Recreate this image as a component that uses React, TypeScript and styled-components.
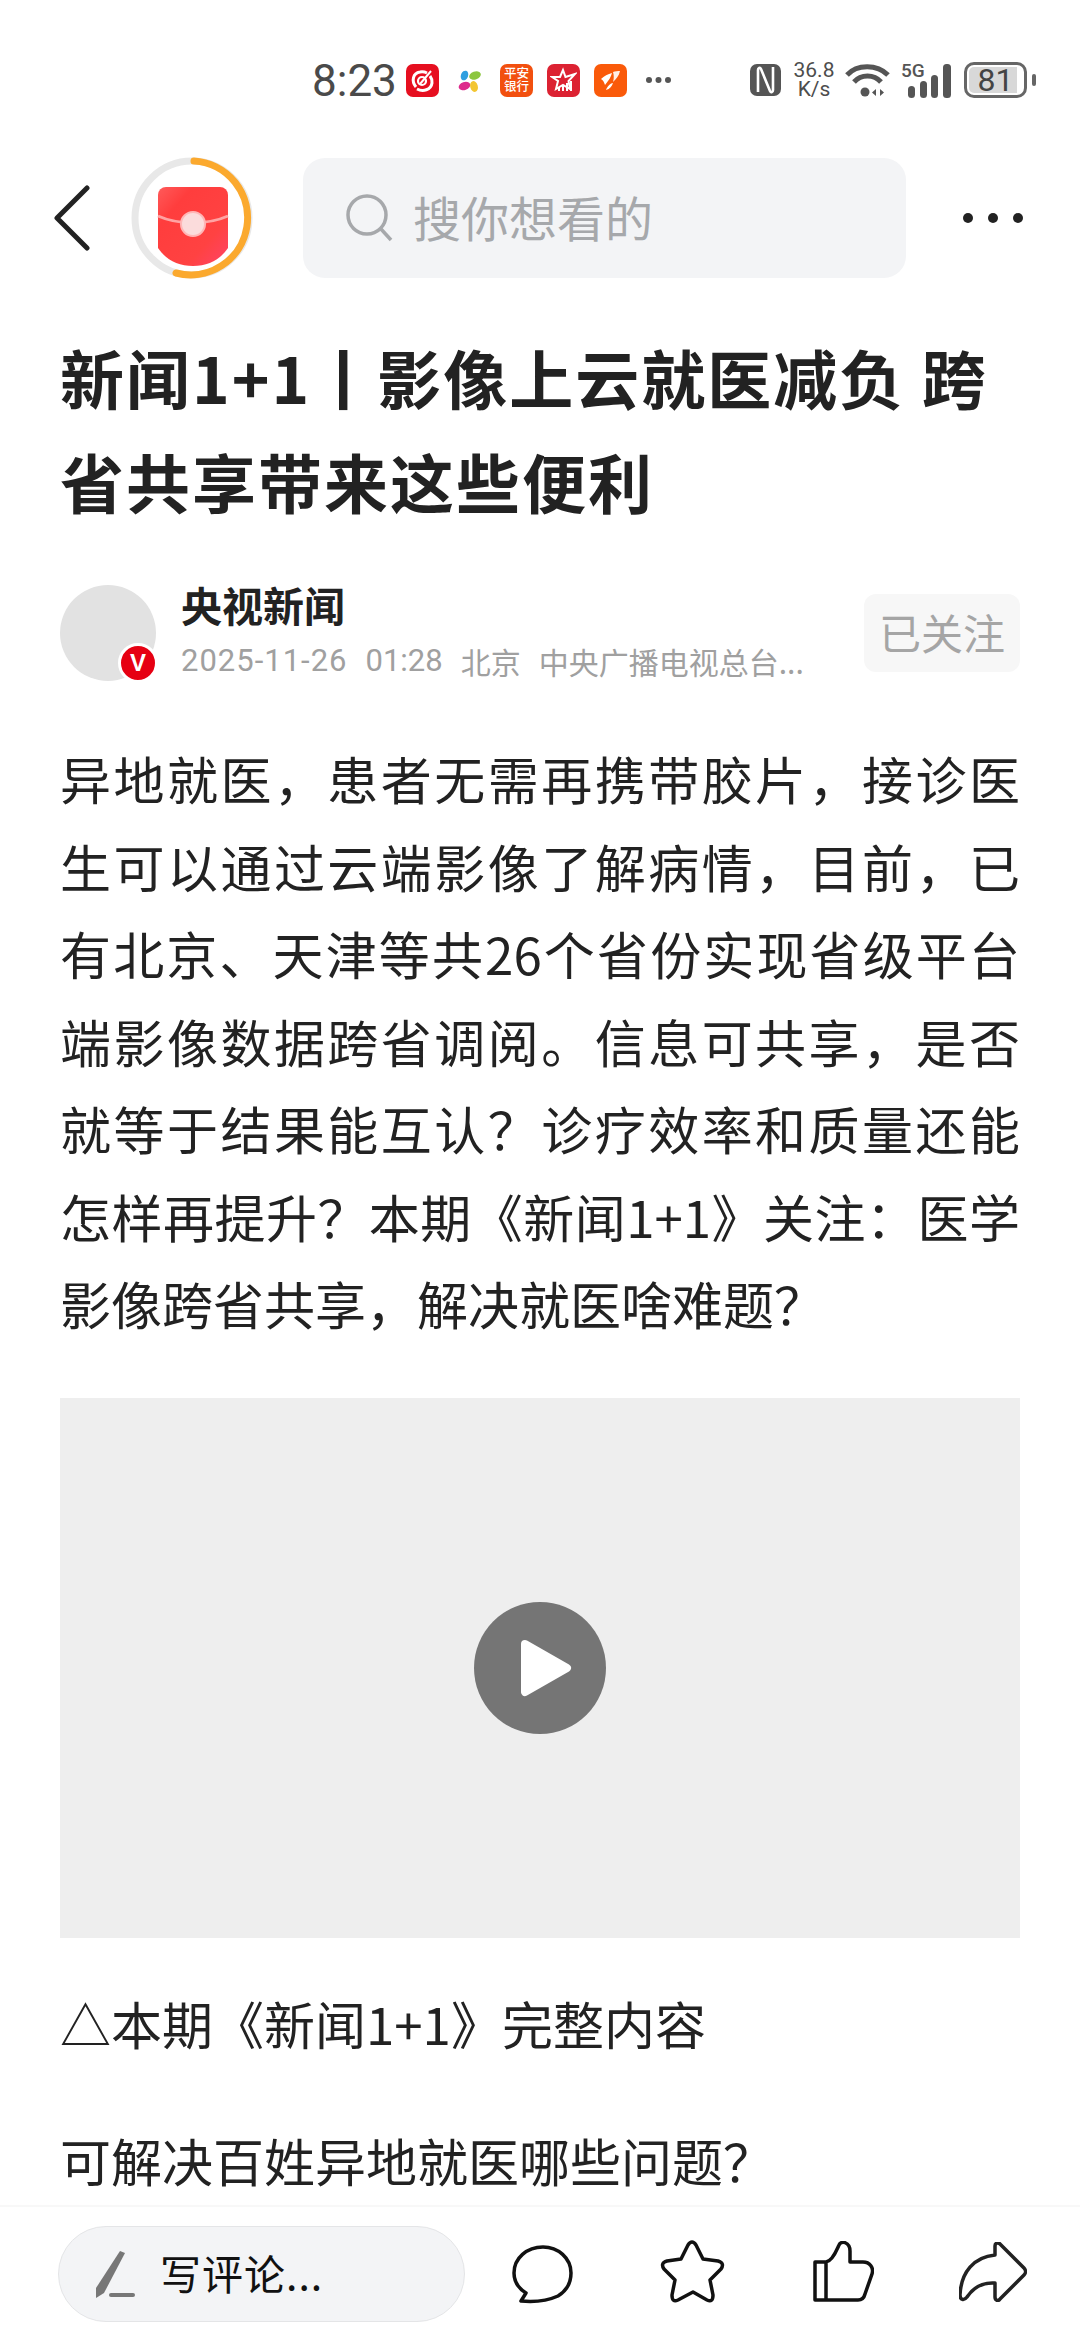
import React from "react";
import styled, { createGlobalStyle } from "styled-components";

const Global = createGlobalStyle`
  html, body { margin: 0; padding: 0; background: #fff; }
  * { box-sizing: border-box; }
  body { font-family: "Noto Sans CJK SC", "Noto Sans", sans-serif; }
`;

const Page = styled.div`
  width: 1080px;
  height: 2340px;
  display: flex;
  flex-direction: column;
  overflow: hidden;
  background: #fff;
`;

const StatusBar = styled.div`
  height: 158px;
  flex: none;
  display: flex;
  align-items: flex-start;
  padding: 64px 53px 0 312px;
`;
const Time = styled.div`
  font: 400 44px/35px Roboto, sans-serif;
  color: #4a4a4a;
  width: 94px;
  flex: none;
`;
const AppIcon = styled.div<{ $bg: string }>`
  width: 33px;
  height: 33px;
  border-radius: 7px;
  background: ${(p) => p.$bg};
  margin-right: 14px;
  flex: none;
  display: flex;
  align-items: center;
  justify-content: center;
  svg { display: block; }
`;
const BankLabel = styled.div`
  color: #fff;
  font-size: 12.5px;
  line-height: 13px;
  font-weight: 500;
  width: 28px;
  text-align: center;
  padding-bottom: 3px;
`;
const MoreSmall = styled.svg`
  margin: 12px 0 0 4px;
  flex: none;
`;
const Spacer = styled.div`
  flex: 1;
`;
const SysIcons = styled.div`
  display: flex;
  align-items: center;
  height: 36px;
  margin-top: -2px;
  color: #4d4d4d;
  flex: none;
`;
const Speed = styled.div`
  font: 400 21px/19px Roboto, sans-serif;
  color: #4d4d4d;
  text-align: center;
  width: 42px;
  margin: 0 10px 0 11px;
  flex: none;
`;
const SignalIcon = styled.svg`
  margin-left: 11px;
  flex: none;
`;
const Battery = styled.div`
  width: 63px;
  height: 36px;
  border: 3px solid #666;
  border-radius: 10px;
  padding: 2px;
  margin-left: 13px;
  position: relative;
  flex: none;
  &::after {
    content: "";
    position: absolute;
    right: -12px;
    top: 9px;
    width: 4px;
    height: 12px;
    border-radius: 2px;
    background: #666;
  }
`;
const BatteryFill = styled.div`
  height: 100%;
  width: 100%;
  border-radius: 5px;
  background: linear-gradient(90deg, #d8d8d8 0 90%, transparent 90%);
  font: 400 32px/26px Roboto, sans-serif;
  color: #444;
  text-align: center;
`;

const Header = styled.header`
  height: 120px;
  flex: none;
  display: flex;
  align-items: center;
  padding-left: 54px;
`;
const Back = styled.svg`
  flex: none;
  margin-right: 41px;
`;
const Ring = styled.div`
  width: 122px;
  height: 122px;
  flex: none;
  margin-right: 50px;
`;
const Search = styled.div`
  width: 603px;
  height: 120px;
  border-radius: 22px;
  background: #f3f4f6;
  display: flex;
  align-items: center;
  padding-left: 43px;
  flex: none;
`;
const SearchText = styled.span`
  font-size: 48px;
  color: #a6a8ab;
  margin: 0 0 4px 20px;
  line-height: 1;
`;
const HeaderMore = styled.svg`
  flex: none;
  margin-left: 57px;
`;

const Scroll = styled.main`
  flex: 1;
  min-height: 0;
  overflow: hidden;
  padding: 0 60px;
`;
const Title = styled.h1`
  margin: 0;
  padding-top: 46px;
  font-size: 64px;
  line-height: 104px;
  font-weight: 700;
  color: #222;
  letter-spacing: 2px;
`;
const Author = styled.div`
  display: flex;
  align-items: center;
  margin-top: 53px;
  height: 96px;
`;
const AvatarWrap = styled.div`
  position: relative;
  width: 96px;
  height: 96px;
  border-radius: 50%;
  background: #e2e2e2;
  flex: none;
`;
const VBadge = styled.div`
  position: absolute;
  right: -2px;
  bottom: -2px;
  width: 40px;
  height: 40px;
  border-radius: 50%;
  border: 3px solid #fff;
  background: #e60012;
  color: #fff;
  font: 700 24px/34px "Liberation Sans", sans-serif;
  text-align: center;
`;
const AuthorInfo = styled.div`
  flex: 1;
  min-width: 0;
  padding-left: 25px;
  margin-bottom: 11px;
  display: flex;
  flex-direction: column;
`;
const AuthorName = styled.div`
  font-size: 41px;
  line-height: 56px;
  font-weight: 700;
  color: #222;
`;
const Meta = styled.div`
  margin-top: 11px;
  font-size: 30px;
  line-height: 36px;
  color: #a0a0a0;
  white-space: nowrap;
  display: flex;
  gap: 18px;
`;
const MetaTime = styled.span`
  font-family: Roboto, sans-serif;
  font-size: 31px;
`;
const MetaDate = styled(MetaTime)`
  letter-spacing: 1px;
`;
const Follow = styled.div`
  width: 156px;
  height: 78px;
  border-radius: 12px;
  background: #f7f7f7;
  color: #a5a5a5;
  font-size: 42px;
  display: flex;
  align-items: center;
  justify-content: center;
  flex: none;
  padding-bottom: 4px;
`;
const Body = styled.p`
  margin: 54px 0 0;
  font-size: 51px;
  line-height: 87.5px;
  color: #222;
  text-align: justify;
`;
const Video = styled.div`
  margin-top: 50px;
  height: 540px;
  background: #eee;
  display: flex;
  align-items: center;
  justify-content: center;
`;
const Play = styled.div`
  width: 132px;
  height: 132px;
  border-radius: 50%;
  background: #757575;
  display: flex;
  align-items: center;
  justify-content: center;
  padding-left: 12px;
`;
const Plain = styled.p<{ $top: number }>`
  margin: ${(p) => p.$top}px 0 0;
  font-size: 51px;
  line-height: 70px;
  color: #222;
  white-space: nowrap;
`;

const BottomBar = styled.footer`
  height: 135px;
  flex: none;
  border-top: 2px solid #f8f8f8;
  background: #fff;
  display: flex;
  align-items: flex-start;
  padding: 19px 0 0 58px;
`;
const Comment = styled.div`
  width: 407px;
  height: 96px;
  border-radius: 48px;
  background: #f3f4f6;
  border: 1.5px solid #e4e5e7;
  display: flex;
  align-items: center;
  padding-left: 36px;
  flex: none;
  margin-right: 47px;
`;
const CommentText = styled.span`
  font-size: 41px;
  color: #111;
  margin: 0 0 4px 25px;
  line-height: 1;
  letter-spacing: 1px;
`;
const ActionIcon = styled.svg<{ $gap: number; $top: number }>`
  flex: none;
  margin-right: ${(p) => p.$gap}px;
  margin-top: ${(p) => p.$top}px;
  display: block;
`;

export default function App() {
  return (
    <Page>
      <Global />
      <StatusBar>
        <Time>8:23</Time>
        <AppIcon $bg="#e60f20">
          <svg width="27" height="27" viewBox="0 0 27 27" fill="none" stroke="#fff">
            <path d="M7 20C2 14 4 6 11 5c3-.5 5 0 7 1" strokeWidth="3" />
            <path d="M8 22c6 3 14 1 15-6 .4-3-.5-5-2-7" strokeWidth="3" />
            <circle cx="13" cy="14" r="4" strokeWidth="2.2" />
            <path d="M11 17 22 4" strokeWidth="2" />
          </svg>
        </AppIcon>
        <AppIcon $bg="#fff">
          <svg width="24" height="24" viewBox="0 0 24 24">
            <ellipse cx="6.5" cy="6.5" rx="3.6" ry="5" fill="#2f9fe0" transform="rotate(20 6.5 6.5)" />
            <ellipse cx="17" cy="6.5" rx="6" ry="4" fill="#8cc63f" transform="rotate(-20 17 6.5)" />
            <ellipse cx="6.5" cy="17" rx="6" ry="4" fill="#dd2a8c" transform="rotate(-20 6.5 17)" />
            <ellipse cx="16" cy="17.5" rx="3.8" ry="5.5" fill="#f3c632" transform="rotate(-15 16 17.5)" />
          </svg>
        </AppIcon>
        <AppIcon $bg="#f2500f">
          <BankLabel>平安银行</BankLabel>
        </AppIcon>
        <AppIcon $bg="#dc2232">
          <svg width="27" height="27" viewBox="0 0 27 27" fill="none" stroke="#fff" strokeWidth="2">
            <path d="M13 3 15.5 10 25 7 18.5 14 20 22 13 18 6 22 8 14 2 10 10 10Z" />
            <path d="M9 24v-4M13 24v-6M17 24v-8M21 24v-10" />
          </svg>
        </AppIcon>
        <AppIcon $bg="#fa5a0a">
          <svg width="25" height="25" viewBox="0 0 25 25" fill="#fff">
            <path d="M3 11C6 8 10 6 14 5 13 9 11 12 7 17 6 14 5 12 3 11Z" />
            <path d="M15 4C17 3 20 3 22 3 21 8 18 11 15 14 16 11 16 7 15 4Z" opacity=".9" />
            <path d="M8 22C9 19 12 15 15 15 14 18 12 21 8 22Z" />
          </svg>
        </AppIcon>
        <MoreSmall width="27" height="8" viewBox="0 0 27 8" fill="#555">
          <circle cx="4" cy="4" r="3" />
          <circle cx="13.5" cy="4" r="3" />
          <circle cx="23" cy="4" r="3" />
        </MoreSmall>
        <Spacer />
        <SysIcons>
          <svg width="33" height="36" viewBox="0 0 33 36" fill="none">
            <rect x="1" y="2" width="31" height="32" rx="7" fill="#555" />
            <path d="M9 30V8c0-2 2-3 3-1l9 22c1 2 3 1 3-1V5" stroke="#fff" strokeWidth="2.6" />
          </svg>
          <Speed>36.8<br />K/s</Speed>
          <svg width="45" height="34" viewBox="0 0 45 34" fill="none" stroke="#555" strokeWidth="5">
            <path d="M2 12C12 1 32 1 43 12" />
            <path d="M9 19C16 11 29 11 36 19" />
            <circle cx="20" cy="29" r="4.5" fill="#555" stroke="none" />
            <path d="M31 26v7l-4-3.5zM35 33v-7l4 3.5z" fill="#555" stroke="none" />
          </svg>
          <SignalIcon width="50" height="36" viewBox="0 0 50 36">
            <text x="0" y="15" fontFamily="Roboto, sans-serif" fontWeight="500" fontSize="19" fill="#555">5G</text>
            <rect x="7" y="24" width="7" height="12" rx="3.5" fill="#555" />
            <rect x="19" y="19" width="7" height="17" rx="3.5" fill="#555" />
            <rect x="30" y="13" width="7" height="23" rx="3.5" fill="#555" />
            <rect x="42" y="2" width="8" height="34" rx="3.5" fill="#555" />
          </SignalIcon>
          <Battery>
            <BatteryFill>81</BatteryFill>
          </Battery>
        </SysIcons>
      </StatusBar>

      <Header>
        <Back width="36" height="66" viewBox="0 0 36 66" fill="none" stroke="#222" strokeWidth="5" strokeLinecap="round" strokeLinejoin="round">
          <path d="M33 3 3 33 33 63" />
        </Back>
        <Ring>
          <svg width="122" height="122" viewBox="0 0 122 122" fill="none">
            <defs>
              <linearGradient id="pk" x1="0" y1="0" x2="1" y2="1">
                <stop offset="0" stopColor="#ff5a5a" />
                <stop offset="0.25" stopColor="#ff3d3d" />
                <stop offset="0.7" stopColor="#ff4242" />
                <stop offset="1" stopColor="#ff4468" />
              </linearGradient>
            </defs>
            <circle cx="61" cy="61" r="57" stroke="#e8e8e8" strokeWidth="7" />
            <path d="M63 4A57 57 0 1 1 45 116" stroke="#fba92e" strokeWidth="7" strokeLinecap="round" />
            <path d="M27 38a8 8 0 0 1 8-8h54a8 8 0 0 1 8 8v53c-8 12-20 18-35 18s-27-6-35-18z" fill="url(#pk)" />
            <path d="M27 59c20 9 50 9 70 0" stroke="#ffa3a3" strokeWidth="3" />
            <circle cx="62" cy="67" r="12" fill="#fbdcdc" stroke="#ffb6b6" strokeWidth="2" />
          </svg>
        </Ring>
        <Search>
          <svg width="47" height="48" viewBox="0 0 47 48" fill="none" stroke="#a6a8ab" strokeWidth="3.5">
            <circle cx="21" cy="21" r="19" />
            <path d="M35 35 45 46" />
          </svg>
          <SearchText>搜你想看的</SearchText>
        </Search>
        <HeaderMore width="60" height="12" viewBox="0 0 60 12" fill="#222">
          <circle cx="5" cy="6" r="5" />
          <circle cx="30" cy="6" r="5" />
          <circle cx="55" cy="6" r="5" />
        </HeaderMore>
      </Header>

      <Scroll>
        <Title>新闻1+1丨影像上云就医减负 跨省共享带来这些便利</Title>
        <Author>
          <AvatarWrap>
            <VBadge>V</VBadge>
          </AvatarWrap>
          <AuthorInfo>
            <AuthorName>央视新闻</AuthorName>
            <Meta>
              <MetaDate>2025-11-26</MetaDate>
              <MetaTime>01:28</MetaTime>
              <span>北京</span>
              <span>中央广播电视总台...</span>
            </Meta>
          </AuthorInfo>
          <Follow>已关注</Follow>
        </Author>
        <Body>
          异地就医，患者无需再携带胶片，接诊医生可以通过云端影像了解病情，目前，已有北京、天津等共26个省份实现省级平台端影像数据跨省调阅。信息可共享，是否就等于结果能互认？诊疗效率和质量还能怎样再提升？本期《新闻1+1》关注：医学影像跨省共享，解决就医啥难题？
        </Body>
        <Video>
          <Play>
            <svg width="52" height="58" viewBox="0 0 52 58">
              <path d="M5 5 47 29 5 53Z" fill="#fff" stroke="#fff" strokeWidth="8" strokeLinejoin="round" />
            </svg>
          </Play>
        </Video>
        <Plain $top={50}>△本期《新闻1+1》完整内容</Plain>
        <Plain $top={67}>可解决百姓异地就医哪些问题？</Plain>
      </Scroll>

      <BottomBar>
        <Comment>
          <svg width="40" height="48" viewBox="0 0 40 48">
            <path d="M25 1 30 3 9 43 1 48 1 38Z" fill="#777" />
            <rect x="14" y="43" width="26" height="4" rx="2" fill="#777" />
          </svg>
          <CommentText>写评论...</CommentText>
        </Comment>
        <ActionIcon $gap={86} $top={19} width="62" height="60" viewBox="0 0 62 60" fill="none" stroke="#111" strokeWidth="3.5" strokeLinejoin="round">
          <path d="M31 2C15 2 2 13 2 28C2 36 6 43 14 48L9 56C20 57 35 56 46 51C54 46 59 38 59 28C59 13 46 2 31 2Z" />
        </ActionIcon>
        <ActionIcon $gap={88} $top={14} width="65" height="64" viewBox="0 0 65 64" fill="none" stroke="#111" strokeWidth="3.5" strokeLinejoin="round">
          <path d="M28 5Q32 -1 36 5L43 19 58 21Q65 23 61 29L50 40 53 55Q53 63 47 60L33 52 18 60Q12 63 12 55L15 40 4 29Q0 23 7 21L21 19Z" />
        </ActionIcon>
        <ActionIcon $gap={85} $top={15} width="61" height="62" viewBox="0 0 61 62" fill="none" stroke="#111" strokeWidth="3.5" strokeLinejoin="round">
          <path d="M2 21H13V59H2ZM13 21C20 20 24 8 26 4C28 -1 37 1 37 10V21H50C57 21 61 27 59 33L52 53C51 57 49 59 45 59H13" />
        </ActionIcon>
        <ActionIcon $gap={0} $top={16} width="68" height="60" viewBox="0 0 68 60" fill="none" stroke="#222" strokeWidth="3.5" strokeLinejoin="round">
          <path d="M36 4C36 1 39 0 41 2L65 26C67 28 67 31 65 33L41 57C39 60 36 58 36 55V41C22 40 14 46 8 55C5 59 1 58 1 53C2 30 15 15 36 13Z" />
        </ActionIcon>
      </BottomBar>
    </Page>
  );
}
